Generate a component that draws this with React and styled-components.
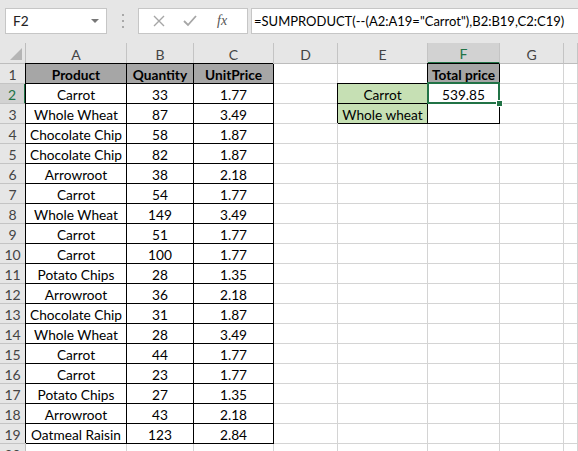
import styled, { createGlobalStyle } from "styled-components";

const GlobalStyle = createGlobalStyle`
  html, body {
    margin: 0;
    padding: 0;
    overflow: hidden;
    background: #ffffff;
  }
`;

const font = `"Lato", "Liberation Sans", sans-serif`;

const Window = styled.div`
  width: 578px;
  height: 451px;
  overflow: hidden;
  font-family: ${font};
  font-size: 13.7px;
  color: #000;
`;

const FormulaBar = styled.div`
  display: flex;
  align-items: center;
  height: 43px;
  padding: 8px 0 10px 5px;
  box-sizing: border-box;
  background: #e6e6e6;
`;

const NameBox = styled.div`
  display: flex;
  align-items: center;
  justify-content: space-between;
  width: 102px;
  height: 26px;
  box-sizing: border-box;
  padding: 0 7px 0 7px;
  background: #fff;
  border: 1px solid #c6c6c6;
  color: #222;
`;

const Caret = styled.span`
  width: 0;
  height: 0;
  border-left: 4px solid transparent;
  border-right: 4px solid transparent;
  border-top: 4px solid #777;
`;

const Grip = styled.div`
  display: flex;
  flex-direction: column;
  gap: 4px;
  margin: 0 14px 0 15px;
  span {
    width: 2px;
    height: 2px;
    background: #a8a8a8;
  }
`;

const IconBox = styled.div`
  display: flex;
  align-items: center;
  width: 110px;
  height: 26px;
  box-sizing: border-box;
  background: #fff;
  border: 1px solid #c6c6c6;
  padding-left: 14px;
  gap: 18px;
`;

const Fx = styled.span`
  font-family: "Liberation Serif", serif;
  font-style: italic;
  font-size: 14px;
  color: #555;
  margin-left: 2px;
`;

const FormulaInput = styled.div`
  flex: 1;
  height: 26px;
  margin-left: 3px;
  box-sizing: border-box;
  background: #fff;
  border: 1px solid #c6c6c6;
  border-right: none;
  padding: 0 0 0 2px;
  display: flex;
  align-items: center;
  white-space: nowrap;
  overflow: hidden;
  font-size: 13px;
`;

const Sheet = styled.div`
  display: grid;
  grid-template-columns: 26px 101px 67px 80px 64px 90px 72px 64px 1fr;
  grid-auto-rows: 20px;
  grid-template-rows: 21px;
`;

const ColHeader = styled.div`
  display: flex;
  align-items: center;
  justify-content: center;
  box-sizing: border-box;
  background: ${(p) => (p.$active ? "#d2d2d2" : "#e6e6e6")};
  color: ${(p) => (p.$active ? "#217346" : "#444")};
  border-right: 1px solid #c4c4c4;
  border-bottom: ${(p) => (p.$active ? "2px solid #217346" : "1px solid #bdbdbd")};
  padding-top: 2px;
  font-size: 14px;
`;

const RowHeader = styled.div`
  display: flex;
  align-items: center;
  justify-content: center;
  box-sizing: border-box;
  background: ${(p) => (p.$active ? "#d2d2d2" : "#e6e6e6")};
  color: ${(p) => (p.$active ? "#217346" : "#444")};
  border-bottom: 1px solid #c4c4c4;
  border-right: ${(p) => (p.$active ? "2px solid #217346" : "1px solid #bdbdbd")};
  padding-top: 1px;
  font-size: 14px;
`;

const Corner = styled.div`
  box-sizing: border-box;
  background: #e6e6e6;
  border-right: 1px solid #bdbdbd;
  border-bottom: 1px solid #bdbdbd;
  display: flex;
  align-items: flex-end;
  justify-content: flex-end;
  padding: 0 3px 3px 0;
`;

const Cell = styled.div`
  position: relative;
  display: flex;
  align-items: center;
  justify-content: center;
  box-sizing: border-box;
  padding-top: 1px;
  white-space: nowrap;
  background: ${(p) => p.$fill || "#fff"};
  font-weight: ${(p) => (p.$bold ? 700 : 400)};
  border-right: 1px solid ${(p) => (p.$boxed ? "#000" : "#d4d4d4")};
  border-bottom: 1px solid ${(p) => (p.$boxed ? "#000" : "#d4d4d4")};
  box-shadow: ${(p) => (p.$boxed ? "-1px -1px 0 0 #000" : "none")};
`;

const Selection = styled.span`
  position: absolute;
  top: -2px;
  left: -1px;
  right: -1px;
  bottom: -1px;
  border: 2px solid #217346;
  pointer-events: none;
  z-index: 2;
`;

const FillHandle = styled.span`
  position: absolute;
  right: -4px;
  bottom: -4px;
  width: 5px;
  height: 5px;
  background: #217346;
  border: 1px solid #fff;
  z-index: 3;
`;

const cols = ["A", "B", "C", "D", "E", "F", "G", ""];
const gray = "#a6a6a6";
const green = "#c6e0b4";

const data = [
  ["Carrot", 33, "1.77"],
  ["Whole Wheat", 87, "3.49"],
  ["Chocolate Chip", 58, "1.87"],
  ["Chocolate Chip", 82, "1.87"],
  ["Arrowroot", 38, "2.18"],
  ["Carrot", 54, "1.77"],
  ["Whole Wheat", 149, "3.49"],
  ["Carrot", 51, "1.77"],
  ["Carrot", 100, "1.77"],
  ["Potato Chips", 28, "1.35"],
  ["Arrowroot", 36, "2.18"],
  ["Chocolate Chip", 31, "1.87"],
  ["Whole Wheat", 28, "3.49"],
  ["Carrot", 44, "1.77"],
  ["Carrot", 23, "1.77"],
  ["Potato Chips", 27, "1.35"],
  ["Arrowroot", 43, "2.18"],
  ["Oatmeal Raisin", 123, "2.84"],
];

// build the sheet cell by cell: row number -> array of cell props
function rowCells(r) {
  const c = Array.from({ length: 8 }, () => ({}));
  if (r === 1) {
    c[0] = { text: "Product", boxed: true, bold: true, fill: gray };
    c[1] = { text: "Quantity", boxed: true, bold: true, fill: gray };
    c[2] = { text: "UnitPrice", boxed: true, bold: true, fill: gray };
    c[5] = { text: "Total price", boxed: true, bold: true, fill: gray };
  } else if (r <= 19) {
    const d = data[r - 2];
    c[0] = { text: d[0], boxed: true };
    c[1] = { text: d[1], boxed: true };
    c[2] = { text: d[2], boxed: true };
  }
  if (r === 2) {
    c[4] = { text: "Carrot", boxed: true, fill: green };
    c[5] = { text: "539.85", boxed: true, selected: true };
  }
  if (r === 3) {
    c[4] = { text: "Whole wheat", boxed: true, fill: green };
    c[5] = { boxed: true };
  }
  return c;
}

const rows = Array.from({ length: 20 }, (_, i) => i + 1);

export default function App() {
  return (
    <Window>
      <GlobalStyle />
      <FormulaBar>
        <NameBox>
          F2
          <Caret />
        </NameBox>
        <Grip>
          <span />
          <span />
          <span />
        </Grip>
        <IconBox>
          <svg width="12" height="12" viewBox="0 0 12 12">
            <path d="M1 1 L11 11 M11 1 L1 11" stroke="#a6a6a6" strokeWidth="1.4" />
          </svg>
          <svg width="14" height="12" viewBox="0 0 14 12">
            <path d="M1 6 L5 10 L13 1" stroke="#a6a6a6" strokeWidth="1.8" fill="none" />
          </svg>
          <Fx>fx</Fx>
        </IconBox>
        <FormulaInput>=SUMPRODUCT(--(A2:A19="Carrot"),B2:B19,C2:C19)</FormulaInput>
      </FormulaBar>
      <Sheet>
        <Corner>
          <svg width="12" height="12" viewBox="0 0 12 12">
            <path d="M12 0 L12 12 L0 12 Z" fill="#b5b5b5" />
          </svg>
        </Corner>
        {cols.map((c, i) => (
          <ColHeader key={i} $active={c === "F"}>
            {c}
          </ColHeader>
        ))}
        {rows.map((r) => [
          <RowHeader key={"h" + r} $active={r === 2}>
            {r}
          </RowHeader>,
          ...rowCells(r).map((cell, i) => (
            <Cell
              key={r + "-" + i}
              $boxed={cell.boxed}
              $bold={cell.bold}
              $fill={cell.fill}
            >
              {cell.text}
              {cell.selected && (
                <>
                  <Selection />
                  <FillHandle />
                </>
              )}
            </Cell>
          )),
        ])}
      </Sheet>
    </Window>
  );
}
